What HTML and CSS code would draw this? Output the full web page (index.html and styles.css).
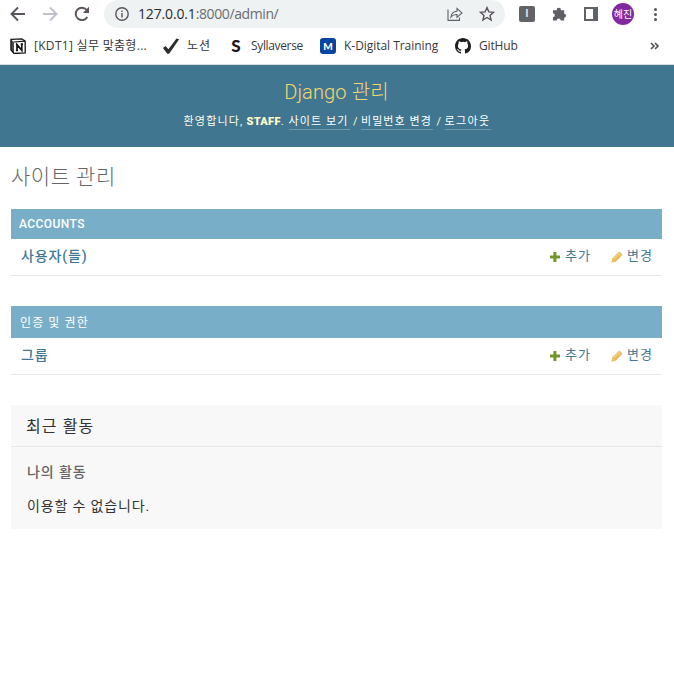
FILE: index.html
```html
<!DOCTYPE html>
<html lang="ko">
<head>
<meta charset="utf-8">
<title>사이트 관리 | Django 사이트 관리</title>
<link rel="stylesheet" href="styles.css">
</head>
<body>
<svg width="0" height="0" class="defs">
  <symbol id="plus" viewBox="0 0 12 12"><path d="M4.400 1h3v3.500H11v3H7.400V11h-3V7.500H1v-3h3.400z" fill="#70962b"/></symbol>
  <symbol id="pencil" viewBox="0 0 12 12"><path d="M.4 11.600l.8-4L7.600 1.200q.8-.8 1.600 0l1.700 1.700q.8.8 0 1.600L4.400 10.900z" fill="#e8bb55"/><path d="M2.500 8.100l4.700-4.700M7.400 2.600l2.100 2.100M1.800 9.200l1.100 1.200" stroke="#fff3cf" stroke-width=".7"/></symbol>
</svg>
<div class="toolbar">
  <svg class="nav-icon back" viewBox="0 0 16 16"><path d="M15 8H2M8 1.500L1.500 8 8 14.500" /></svg>
  <svg class="nav-icon forward" viewBox="0 0 16 16"><path d="M1 8h13M8 1.500L14.500 8 8 14.500" /></svg>
  <svg class="nav-icon reload" viewBox="0 0 16 16"><path d="M13.300 11A6.200 6.200 0 1 1 12.600 3.800L14 5.300"/><path d="M15 .8v6.200H8.800z" class="solid"/></svg>
  <div class="address">
    <svg class="info" viewBox="0 0 14 14"><circle cx="7" cy="7" r="6.200"/><path d="M7 6v4.500M7 3.400V5"/></svg>
    <span class="url"><b>127.0.0.1</b>:8000/admin/</span>
    <svg class="share" viewBox="0 0 16 16"><path d="M1 3.500v10.900h11.500V11.500M4 11q.5-5.500 6-5.800V2.400L15 7l-5 4.300V8.500Q6 8.300 4 11z"/></svg>
    <svg class="star" viewBox="0 0 16 16"><path d="M8 1.600l1.900 4.300 4.700.4-3.600 3.100 1.100 4.600L8 11.500 3.900 14 5 9.400 1.400 6.300l4.700-.4z"/></svg>
  </div>
  <span class="ext">I</span>
  <svg class="puzzle" viewBox="0 0 16 16"><path d="M1 4h4.200a2.100 2.100 0 1 1 4.100 0H13v3.800a2 2 0 1 1 0 4V15H9.300a2.100 2.100 0 0 0-4.200 0H1v-3.800a2 2 0 0 0 0-4z"/></svg>
  <span class="panel"></span>
  <span class="avatar">혜진</span>
  <span class="dots"><i></i><i></i><i></i></span>
</div>
<div class="bookmarks">
  <svg class="bm-icon" viewBox="0 0 16 16"><path d="M1 1.300L11.700.8 15.200 3.200v11.700L4 15.500 1 12z" fill="#fff" stroke="#171414" stroke-width="1.300"/><path d="M.8 1.500L4 4v11.300L.8 12z" fill="#171414" opacity=".75"/><path d="M4 4l11-.8" stroke="#171414" stroke-width="1.200"/><path d="M7 12.500V6.600l4.800 5.800V6.200M5.900 6.500h1.700M5.900 12.500h2.200M10.700 6.200h2.300" stroke="#171414" stroke-width="1.700"/></svg>
  <span class="bm bm-kdt">[KDT1] 실무 맞춤형...</span>
  <svg class="bm-icon" viewBox="0 0 16 16"><path d="M0 10l2.400-2 3 3.200L13.500.4l2.700.8L6.300 15.500 4.500 16z" fill="#2d2b2b"/></svg>
  <span class="bm bm-notion">노션</span>
  <span class="s-logo">S</span>
  <span class="bm bm-syl">Syllaverse</span>
  <span class="m-logo">M</span>
  <span class="bm bm-kd">K-Digital Training</span>
  <svg class="bm-icon" viewBox="0 0 16 16"><path fill="#211e1e" d="M8 0C3.580 0 0 3.580 0 8c0 3.540 2.290 6.530 5.470 7.590.4.070.55-.17.55-.38 0-.19-.01-.82-.01-1.490-2.010.37-2.530-.49-2.690-.94-.09-.23-.48-.94-.82-1.130-.28-.15-.68-.52-.01-.53.63-.01 1.080.58 1.230.82.72 1.210 1.870.87 2.330.66.07-.52.28-.87.51-1.070-1.780-.2-3.640-.89-3.640-3.950 0-.87.31-1.590.82-2.150-.08-.2-.36-1.020.08-2.120 0 0 .67-.21 2.200.82a7.600 7.600 0 0 1 4 0c1.530-1.040 2.200-.82 2.200-.82.44 1.100.16 1.920.08 2.120.51.56.82 1.270.82 2.150 0 3.070-1.870 3.750-3.650 3.950.29.25.54.73.54 1.480 0 1.070-.01 1.930-.01 2.200 0 .21.15.46.55.38A8 8 0 0 0 16 8c0-4.420-3.580-8-8-8z"/></svg>
  <span class="bm bm-git">GitHub</span>
  <svg class="more" viewBox="0 0 9 8"><path d="M1 1l3 3-3 3M5 1l3 3-3 3"/></svg>
</div>
<header>
  <h1>Django 관리</h1>
  <div class="user-tools"><span class="welcome"><span class="greet">환영합니다,</span> <strong>STAFF</strong>.</span><a class="l1">사이트 보기</a><span class="sep">/</span><a class="l2">비밀번호 변경</a><span class="sep">/</span><a class="l3">로그아웃</a></div>
</header>
<main>
  <h2>사이트 관리</h2>
  <section class="module">
    <div class="caption accounts">ACCOUNTS</div>
    <div class="row"><span class="model users">사용자(들)</span><svg class="act"><use href="#plus"/></svg><a class="add">추가</a><svg class="act"><use href="#pencil"/></svg><a class="change">변경</a></div>
  </section>
  <section class="module">
    <div class="caption auth">인증 및 권한</div>
    <div class="row"><span class="model">그룹</span><svg class="act"><use href="#plus"/></svg><a class="add">추가</a><svg class="act"><use href="#pencil"/></svg><a class="change">변경</a></div>
  </section>
  <section class="recent">
    <h3>최근 활동</h3>
    <h4>나의 활동</h4>
    <p>이용할 수 없습니다.</p>
  </section>
</main>
</body>
</html>
```
FILE: styles.css
```css
* { box-sizing: border-box; }
body { margin: 0; width: 674px; height: 674px; overflow: hidden; background: #fff; color: #333; font-family: Roboto, "Noto Sans CJK KR", sans-serif; white-space: nowrap; }
h1, h2, h3, h4, p { margin: 0; font-weight: 300; }
svg { display: block; flex: none; fill: none; }
.defs { position: absolute; }
.toolbar { display: flex; align-items: center; height: 28px; padding-left: 10px; }
.nav-icon { width: 16px; height: 16px; stroke: #5b535b; stroke-width: 1.900; }
.forward { margin-left: 16px; stroke: #c4bfcd; }
.reload { margin-left: 16px; }
.solid { fill: #5b535b; stroke: none; }
.address { display: flex; align-items: center; width: 401px; height: 28px; margin-left: 14px; padding-left: 11px; border-radius: 14px; background: #eef2f3; }
.info { width: 14px; height: 14px; stroke: #5b535b; stroke-width: 1.400; }
.url { width: 303px; margin-left: 9px; font: 14px/20px "Open Sans", sans-serif; color: #6a6d70; letter-spacing: -.4px; }
.url b { font-weight: 400; color: #2c2c30; letter-spacing: -.15px; }
.share { width: 16px; height: 16px; margin-left: 6px; stroke: #5f6368; stroke-width: 1.100; }
.star { width: 16px; height: 16px; margin-left: 16px; stroke: #5b535b; stroke-width: 1.400; }
.ext { width: 16px; height: 16px; margin-left: 14px; border-radius: 2px; background: #626366; color: #e8eef4; font: 700 10px/16px "Liberation Sans", sans-serif; text-align: center; }
.puzzle { width: 15px; height: 16px; margin-left: 17px; fill: #5f6065; overflow: visible; }
.panel { width: 14px; height: 14px; margin-left: 17px; border: 2px solid #5f6368; border-right-width: 5px; }
.avatar { width: 22px; height: 22px; margin-left: 14px; border-radius: 50%; background: #822a9d; color: #fff; font: 400 10px/21px "Noto Sans CJK KR", sans-serif; text-align: center; }
.dots { display: flex; flex-direction: column; gap: 2px; margin-left: 20px; }
.dots i { width: 3px; height: 3px; border-radius: 50%; background: #5b535b; }
.bookmarks { display: flex; align-items: center; height: 37px; padding: 0 0 1px 10px; border-bottom: 1px solid #d8dbdc; }
.bm-icon { width: 16px; height: 16px; }
.bm { flex: none; margin-left: 8px; font: 12px/18px "Open Sans", "Noto Sans CJK KR", sans-serif; color: #38383b; }
.bm-kdt { width: 129px; letter-spacing: .3px; }
.bm-notion { width: 41px; letter-spacing: 1px; }
.s-logo { width: 16px; font: 900 17px/18px Lato, sans-serif; color: #1b1524; text-align: center; }
.bm-syl { width: 69px; margin-left: 7px; letter-spacing: -.35px; }
.m-logo { width: 16px; height: 16px; border-radius: 3px; background: #0745a3; color: #fff; font: 900 10px/16px Lato, sans-serif; text-align: center; }
.bm-kd { width: 111px; letter-spacing: -.04px; }
.bm-git { width: 171px; letter-spacing: -.15px; }
.more { width: 9px; height: 8px; stroke: #5b535b; stroke-width: 1.700; }
header { height: 82px; background: #417690; color: #fff; text-align: center; }
h1 { height: 48px; padding-top: 15px; color: #f5d76e; font-size: 20px; line-height: 25px; letter-spacing: .15px; text-indent: -1px; }
.user-tools { display: flex; justify-content: center; height: 17px; font-size: 11px; line-height: 17px; color: #ffc; text-align: left; }
.welcome { width: 105px; padding-top: 1px; line-height: 16px; letter-spacing: .3px; color: #fffde8; }
.greet { letter-spacing: 1.2px; }
.welcome strong { font-weight: 900; color: #ffc; }
.user-tools a { height: 17px; padding-top: 1px; line-height: 16px; border-bottom: 1px solid #7199ad; color: #fff; }
.l1 { width: 61px; letter-spacing: 1.1px; }
.l2 { width: 72px; letter-spacing: 1.050px; }
.l3 { width: 46px; letter-spacing: 1.400px; }
.sep { width: 11.500px; padding-top: 1px; line-height: 16px; text-align: center; }
main { padding: 0 12px 0 11px; }
h2 { height: 62px; padding-top: 15px; color: #666; font-size: 21px; line-height: 30px; letter-spacing: .5px; }
.module { margin-bottom: 30px; }
.caption { background: #79aec8; color: #fff; font-size: 12px; }
.accounts { height: 30px; padding-left: 8px; line-height: 30px; font-weight: 500; letter-spacing: .42px; }
.auth { height: 32px; padding: 1px 0 0 9px; line-height: 32px; letter-spacing: 1.100px; }
.row { display: flex; align-items: center; height: 37px; padding: 0 10px 3px; border-bottom: 1px solid #e8e8e8; color: #417893; font-size: 13px; line-height: 18px; }
.model { flex: 1; font-weight: 500; font-size: 14px; letter-spacing: .9px; }
.act { width: 12px; height: 12px; }
.row .act { margin-top: 2px; }
.add { width: 46px; margin-left: 4px; letter-spacing: 1px; }
.change { width: 25px; margin-left: 4px; letter-spacing: 1px; }
.recent { height: 124px; background: #f8f8f8; }
h3 { height: 42px; padding-left: 15px; border-bottom: 1px solid #e8e8e8; font-size: 16px; line-height: 43px; font-weight: 400; letter-spacing: 1.100px; }
h4 { padding: 15px 0 0 16px; color: #666; font-size: 14px; line-height: 21px; font-weight: 500; letter-spacing: .9px; }
p { padding: 13px 0 0 16px; font-size: 14px; line-height: 20px; font-weight: 400; letter-spacing: .85px; }
```
